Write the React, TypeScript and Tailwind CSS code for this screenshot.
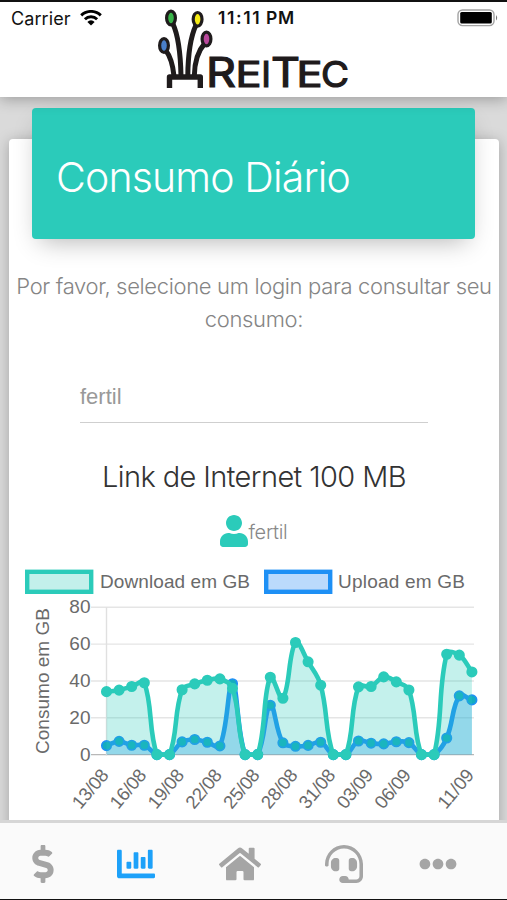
import type { ReactNode } from "react";
import { FaChartBar, FaDollarSign, FaEllipsisH, FaHeadset, FaHome, FaUser } from "react-icons/fa";

const TEAL = "#2bcbba";
const BLUE = "#1e90f5";

const download = [
  34.2, 35, 37, 39, 0, 0, 35.2, 38.4, 40.4, 41.1, 36, 0, 0, 42, 30.6, 60.9, 50.4, 37.7, 0, 0, 36.8,
  37, 42.2, 39.5, 35.1, 0, 0, 54.5, 54, 44.9,
];
const upload = [
  4.9, 7.2, 5.1, 5.1, 0, 0, 6.9, 8.2, 6.7, 4.7, 38.5, 0, 0, 26.8, 6.4, 4.5, 5, 6.7, 0, 0, 7.4, 6.2,
  5.8, 7, 6.5, 0, 0, 9, 31.9, 29.7,
];

const xLabels = [
  { i: 0, text: "13/08" },
  { i: 3, text: "16/08" },
  { i: 6, text: "19/08" },
  { i: 9, text: "22/08" },
  { i: 12, text: "25/08" },
  { i: 15, text: "28/08" },
  { i: 18, text: "31/08" },
  { i: 21, text: "03/09" },
  { i: 24, text: "06/09" },
  { i: 29, text: "11/09" },
];

type Point = { x: number; y: number };

// plot area inside the svg
const LEFT = 97.5;
const STEP = 12.6;
const TOP = 47.3;
const BOTTOM = 194.6;

const px = (i: number) => LEFT + i * STEP;
const py = (v: number) => BOTTOM - (v / 80) * (BOTTOM - TOP);
const clampY = (y: number) => Math.min(BOTTOM, Math.max(TOP, y));

function controls(prev: Point, cur: Point, next: Point) {
  const d1 = Math.hypot(cur.x - prev.x, cur.y - prev.y);
  const d2 = Math.hypot(next.x - cur.x, next.y - cur.y);
  const total = d1 + d2 || 1;
  const fa = (0.4 * d1) / total;
  const fb = (0.4 * d2) / total;
  return {
    before: { x: cur.x - fa * (next.x - prev.x), y: clampY(cur.y - fa * (next.y - prev.y)) },
    after: { x: cur.x + fb * (next.x - prev.x), y: clampY(cur.y + fb * (next.y - prev.y)) },
  };
}

function linePath(points: Point[]) {
  const cps = points.map((p, i) => controls(points[i - 1] ?? p, p, points[i + 1] ?? p));
  return points
    .map((p, i) => {
      if (i === 0) return `M${p.x} ${p.y}`;
      const a = cps[i - 1].after;
      const b = cps[i].before;
      return `C${a.x} ${a.y} ${b.x} ${b.y} ${p.x} ${p.y}`;
    })
    .join(" ");
}

type SeriesProps = { values: number[]; color: string; fill: string; dot: string };

function Series({ values, color, fill, dot }: SeriesProps) {
  const points = values.map((v, i) => ({ x: px(i), y: py(v) }));
  const d = linePath(points);
  return (
    <g>
      <path d={`${d} L${px(values.length - 1)} ${BOTTOM} L${LEFT} ${BOTTOM} Z`} fill={fill} />
      <path d={d} fill="none" stroke={color} strokeWidth="4.6" strokeLinejoin="round" />
      {points.map((p, i) => (
        <circle key={i} cx={p.x} cy={p.y} r="4.7" fill={dot} stroke={color} strokeWidth="1.7" />
      ))}
    </g>
  );
}

function UsageChart() {
  return (
    <svg
      width="489"
      height="260"
      viewBox="0 0 489 260"
      className="block font-['Liberation_Sans',Arial,sans-serif] text-[19px]"
      fill="#6a6a6a"
    >
      <rect x="18.2" y="11.8" width="64" height="20" fill="#c3f0eb" stroke={TEAL} strokeWidth="4.4" />
      <text x="91" y="28" textLength="150">
        Download em GB
      </text>
      <rect x="257.2" y="11.8" width="64" height="20" fill="#bbdafc" stroke={BLUE} strokeWidth="4.4" />
      <text x="329" y="28" textLength="127">
        Upload em GB
      </text>

      <text transform="translate(40 194) rotate(-90)" textLength="146">
        Consumo em GB
      </text>

      {[80, 60, 40, 20, 0].map((v) => (
        <g key={v}>
          <line
            x1="82"
            x2="465"
            y1={py(v)}
            y2={py(v)}
            stroke={v === 0 ? "#b8b8b8" : "#e5e5e5"}
            strokeWidth="1.4"
          />
          <text x="81.5" y={py(v) + 6} textAnchor="end">
            {v}
          </text>
        </g>
      ))}
      <line x1={LEFT} x2={LEFT} y1={TOP} y2={BOTTOM + 1} stroke="#e0e0e0" strokeWidth="1.4" />

      <Series values={upload} color={BLUE} fill="rgba(30,144,245,0.3)" dot="#14acc0" />
      <Series values={download} color={TEAL} fill="rgba(43,203,186,0.28)" dot={TEAL} />

      {xLabels.map((l) => (
        <text
          key={l.text}
          transform={`translate(${px(l.i) + 3} 215.5) rotate(-50)`}
          textAnchor="end"
          fontSize="18.5"
          textLength="45"
        >
          {l.text}
        </text>
      ))}
    </svg>
  );
}

function Logo() {
  return (
    <svg width="200" height="90" viewBox="155 5 200 90" className="block overflow-visible" aria-label="ReiTec">
      <g fill="none" stroke="#1f1b1c" strokeWidth="5">
        <path d="M174 24 C179 35 181.5 52 182 76" />
        <path d="M197 25 C191 38 189 54 188.8 76" />
        <path d="M166.5 50 C172 57 174 66 175 76" />
        <path d="M206 43 C198 52 195.5 62 195.3 76" />
        <path d="M170.5 88 V77 H201.3 V88" strokeWidth="5.4" strokeLinejoin="round" />
      </g>
      <g stroke="#1f1b1c" strokeWidth="3.2">
        <ellipse cx="172" cy="18" rx="4.4" ry="6.8" fill="#39b54a" />
        <ellipse cx="198.6" cy="19.3" rx="4.4" ry="6.8" fill="#f5ea14" />
        <ellipse cx="165" cy="45.5" rx="4.4" ry="6.8" fill="#4a7fc9" />
        <ellipse cx="207.5" cy="39" rx="4.4" ry="6.8" fill="#b8479b" />
      </g>
      <g className="font-['Inter',sans-serif] font-normal" fill="#1f1b1c" stroke="#1f1b1c" strokeWidth="1.2">
        <text x="207" y="87.2" fontSize="41" textLength="30" lengthAdjust="spacingAndGlyphs">R</text>
        <text x="236.5" y="87.2" fontSize="36" textLength="26" lengthAdjust="spacingAndGlyphs">E</text>
        <text x="262.3" y="87.2" fontSize="36">I</text>
        <text x="272" y="87.2" fontSize="41" textLength="29" lengthAdjust="spacingAndGlyphs">T</text>
        <text x="297.5" y="87.2" fontSize="36" textLength="26" lengthAdjust="spacingAndGlyphs">E</text>
        <text x="322" y="87.2" fontSize="36" textLength="28" lengthAdjust="spacingAndGlyphs">C</text>
      </g>
    </svg>
  );
}

function StatusBar() {
  return (
    <div className="absolute inset-x-0 top-0 flex h-8 items-center justify-between pl-[11px] pr-[8px] font-['Inter',sans-serif] text-[17.5px] text-[#111]">
      <div className="flex items-center gap-2">
        <span className="w-[61px] whitespace-nowrap tracking-[0.1px] text-[18px]">Carrier</span>
        <svg width="22" height="16" viewBox="0 0 22 16" fill="none" stroke="#000" strokeWidth="2.9">
          <path d="M1.2 5.4 A14 14 0 0 1 20.8 5.4" />
          <path d="M4.9 9.2 A8.7 8.7 0 0 1 17.1 9.2" />
          <path d="M11 15.5 L7.4 11.9 A5 5 0 0 1 14.6 11.9 Z" fill="#000" stroke="none" />
        </svg>
      </div>
      <span className="absolute left-[218px] whitespace-nowrap font-semibold tracking-[1.6px]">
        11:11<span className="tracking-[0.5px]"> PM</span>
      </span>
      <svg width="42" height="18" viewBox="0 0 42 18">
        <rect x="1" y="1" width="36" height="15.6" rx="4.5" fill="#fff" stroke="#a3a3a3" strokeWidth="1.4" />
        <rect x="3.2" y="3" width="31.6" height="11.6" rx="1.5" fill="#000" />
        <path d="M39 6 Q41.4 8.8 39 11.6 Z" fill="#777" />
      </svg>
    </div>
  );
}

type TabProps = { children: ReactNode; className: string };

function Tab({ children, className }: TabProps) {
  return (
    <button type="button" className={`flex shrink-0 items-center justify-center text-[38px] ${className}`}>
      {children}
    </button>
  );
}

export default function App() {
  return (
    <div className="flex h-[900px] w-[507px] flex-col overflow-hidden border-t-2 border-b border-[#111] bg-[#dadada]">
      <header className="relative z-20 flex h-[94.5px] shrink-0 justify-center bg-white pt-[3px] shadow-[0_2px_14px_rgba(0,0,0,0.3)]">
        <Logo />
        <StatusBar />
      </header>

      <main className="min-h-0 flex-1 overflow-hidden pl-[9px] pr-[8px] pt-[42px]">
        <section className="flex h-[800px] flex-col rounded-[4px] bg-white shadow-[0_2px_14px_rgba(0,0,0,0.25)]">
          <div className="-mt-[31px] ml-[23.4px] mr-[24px] flex h-[131px] shrink-0 items-center rounded-[4px] bg-[#2bcbba] pl-[23.6px] pt-[9px] shadow-[0_10px_24px_-8px_rgba(0,0,0,0.3)]">
            <h1 className="whitespace-nowrap font-['Inter','Liberation_Sans',sans-serif] text-[41px] font-light tracking-[-0.85px] text-white">
              Consumo Diário
            </h1>
          </div>

          <p className="mt-[31px] text-center font-['Inter','Liberation_Sans',sans-serif] text-[22px] font-light leading-[33.5px] tracking-[-0.34px] text-[#858585]">
            <span className="whitespace-nowrap">Por favor, selecione um login para consultar seu</span>
            <br />
            consumo:
          </p>

          <div className="mx-[71px] mt-[46px] flex h-[40px] items-start border-b-[1.5px] border-[#cfcfcf] font-['Liberation_Sans',Arial,sans-serif] text-[22px] leading-7 text-[#999]">
            fertil
          </div>

          <h2 className="mt-9 text-center font-['Inter','Liberation_Sans',sans-serif] text-[29px] font-light leading-9 tracking-[-0.6px] text-[#333]">
            Link de Internet 100 MB
          </h2>

          <div className="mt-5 flex h-8 items-center justify-center text-[#2bcbba]">
            <FaUser className="h-8 w-7" />
            <span className="pt-0.5 font-['Inter','Liberation_Sans',sans-serif] text-[20px] font-light tracking-[-0.3px] text-[#888]">
              fertil
            </span>
          </div>

          <div className="mt-[13px]">
            <UsageChart />
          </div>
        </section>
      </main>

      <nav className="relative z-20 flex h-[79px] shrink-0 border-t-[3px] border-[#d6d6d6] bg-[#fafafa] pt-[6px] text-[#a5a5a5]">
        <Tab className="w-[86px]">
          <FaDollarSign />
        </Tab>
        <Tab className="w-[100px] text-[#1da1f9]">
          <FaChartBar />
        </Tab>
        <Tab className="w-[108px]">
          <FaHome className="h-[38px] w-[42px]" />
        </Tab>
        <Tab className="w-[100px]">
          <FaHeadset />
        </Tab>
        <Tab className="w-[88px]">
          <FaEllipsisH />
        </Tab>
      </nav>
    </div>
  );
}
